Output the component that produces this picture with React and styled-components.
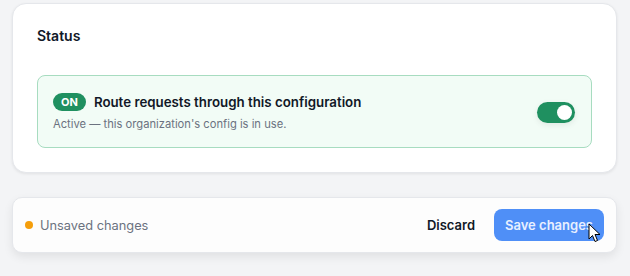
import React from "react";
import styled, { createGlobalStyle } from "styled-components";

const GlobalStyle = createGlobalStyle`
  body {
    margin: 0;
    background: #f3f4f6;
    font-family: Inter, "Noto Sans", sans-serif;
    color: #111827;
  }
`;

const Page = styled.div`
  width: 630px;
  height: 276px;
  padding: 3px 13px 0 12px;
  box-sizing: border-box;
  display: flex;
  flex-direction: column;
  gap: 24px;
`;

const Card = styled.section`
  background: #fff;
  border: 1px solid #e5e7eb;
  border-radius: 14px;
  box-shadow: 0 1px 3px rgba(0, 0, 0, 0.08);
  padding: 22px 24px 24px;
`;

const Heading = styled.h2`
  margin: 0 0 29px;
  font-size: 14px;
  font-weight: 600;
  line-height: 20px;
`;

const StatusBox = styled.div`
  display: flex;
  align-items: center;
  justify-content: space-between;
  background: #f2fcf6;
  border: 1px solid #a7dcc0;
  border-radius: 8px;
  padding: 17px 15px 16px;
`;

const Info = styled.div`
  display: flex;
  flex-direction: column;
  gap: 6px;
`;

const TitleRow = styled.div`
  display: flex;
  align-items: center;
  gap: 8px;
`;

const Badge = styled.span`
  background: #1f9060;
  color: #fff;
  font-size: 11px;
  font-weight: 700;
  border-radius: 999px;
  padding: 2px 8px;
  line-height: 14px;
`;

const Title = styled.span`
  font-size: 13.3px;
  font-weight: 600;
`;

const Sub = styled.span`
  font-size: 11.2px;
  color: #6b7280;
`;

const Toggle = styled.div`
  width: 38px;
  height: 21px;
  border-radius: 999px;
  background: #1f9060;
  position: relative;
  margin-right: 1px;
  box-shadow: 0 2px 6px rgba(0, 0, 0, 0.08);
`;

const Knob = styled.span`
  position: absolute;
  top: 3px;
  right: 3px;
  width: 15px;
  height: 15px;
  border-radius: 50%;
  background: #fff;
`;

const Bar = styled.div`
  background: #fdfdfd;
  border: 1px solid #e5e7eb;
  border-radius: 10px;
  box-shadow: 0 4px 10px rgba(0, 0, 0, 0.08);
  display: flex;
  align-items: center;
  justify-content: space-between;
  padding: 11px 12px;
  min-height: 56px;
  box-sizing: border-box;
`;

const Unsaved = styled.div`
  display: flex;
  align-items: center;
  gap: 7px;
  font-size: 12.8px;
  color: #6b7280;
`;

const Dot = styled.span`
  width: 8px;
  height: 8px;
  border-radius: 50%;
  background: #f59e0b;
`;

const Actions = styled.div`
  display: flex;
  align-items: center;
  gap: 19px;
`;

const Button = styled.button`
  font-family: inherit;
  font-size: 13px;
  font-weight: 600;
  border: none;
  border-radius: 8px;
  height: 32px;
  padding: 0 ${(p) => (p.$primary ? "11px" : "0")};
  background: ${(p) => (p.$primary ? "#4f8ff7" : "transparent")};
  color: ${(p) => (p.$primary ? "#e8f0ff" : "#111827")};
  position: relative;
`;

const Cursor = styled.svg`
  position: absolute;
  left: 94px;
  top: 14px;
`;

export default function App() {
  return (
    <>
      <GlobalStyle />
      <Page>
        <Card>
          <Heading>Status</Heading>
          <StatusBox>
            <Info>
              <TitleRow>
                <Badge>ON</Badge>
                <Title>Route requests through this configuration</Title>
              </TitleRow>
              <Sub>Active — this organization's config is in use.</Sub>
            </Info>
            <Toggle>
              <Knob />
            </Toggle>
          </StatusBox>
        </Card>
        <Bar>
          <Unsaved>
            <Dot />
            Unsaved changes
          </Unsaved>
          <Actions>
            <Button>Discard</Button>
            <Button $primary>
              Save changes
              <Cursor width="13" height="20" viewBox="0 0 13 20">
                <path
                  d="M1 1 L1 16 L4.5 12.5 L7 18.5 L9.5 17.5 L7 11.5 L12 11.5 Z"
                  fill="#fff"
                  stroke="#000"
                  strokeWidth="1"
                  strokeLinejoin="round"
                />
              </Cursor>
            </Button>
          </Actions>
        </Bar>
      </Page>
    </>
  );
}
